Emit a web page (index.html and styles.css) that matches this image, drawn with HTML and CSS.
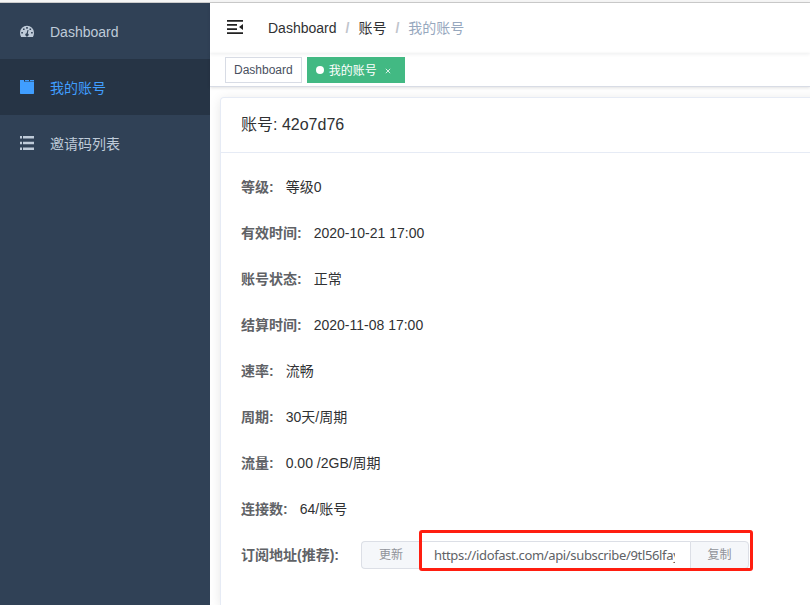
FILE: index.html
```html
<!DOCTYPE html>
<html lang="zh-CN">
<head>
<meta charset="utf-8">
<title>我的账号</title>
<link rel="stylesheet" href="styles.css">
</head>
<body>
<div class="topline"></div>
<div class="app">
  <nav class="sidebar">
    <a class="menu-item first">
      <svg class="icon" viewBox="0 0 14 14"><path fill="currentColor" fill-rule="evenodd" d="M7 .7a7 7 0 0 0-7 7c0 1.500.4 2.900 1.100 4.300h11.800A7.800 7.800 0 0 0 14 7.700a7 7 0 0 0-7-7zM6.200 2.100h1.600v1.600H6.200zM3 3.500h1.600v1.600H3zM1.300 7h1.600v1.600H1.300zM11.100 7h1.600v1.600h-1.600zM9.500 3.500h1.600v1.600H9.500zM7.500 4.900l1 .2-.7 3.400a1.600 1.600 0 1 1-1.200-.2z"/></svg>
      <span>Dashboard</span>
    </a>
    <a class="menu-item active">
      <svg class="icon" viewBox="0 0 14 14"><path fill="currentColor" d="M0 0h4v2h10v11.500l-.5.500H.5L0 13.500zM5 0h4v1.200H5zM10 0h4v1.200h-4z"/><path fill="currentColor" opacity=".5" d="M4 1.200h10V3H4z"/></svg>
      <span>我的账号</span>
    </a>
    <a class="menu-item">
      <svg class="icon" viewBox="0 0 14 14"><path fill="currentColor" d="M0 0h2v2.500H0zM3 0h11v2.500H3zM0 5.800h2v2.500H0zM3 5.800h11v2.500H3zM0 11.500h2V14H0zM3 11.500h11V14H3z"/></svg>
      <span>邀请码列表</span>
    </a>
  </nav>
  <div class="main">
    <header class="navbar">
      <svg class="fold" viewBox="0 0 16 14"><path fill="#222" d="M0 0h16v1.700H0zM0 4h10v1.700H0zM0 8.200h10v1.700H0zM0 12.300h16V14H0zM16 4v6l-4-3z"/></svg>
      <div class="crumbs"><span>Dashboard</span><i>/</i><span>账号</span><i>/</i><span class="current">我的账号</span></div>
    </header>
    <div class="tags">
      <span class="tag">Dashboard</span>
      <span class="tag on"><b class="dot"></b><span class="tag-text">我的账号</span><svg class="close" viewBox="0 0 6 6"><path d="M.8.8l4.400 4.400M5.200.8L.8 5.200" stroke="#d9f0e6" fill="none"/></svg></span>
    </div>
    <section class="card">
      <div class="card-head">账号: 42o7d76</div>
      <div class="card-body">
        <div class="row"><label>等级:</label><span>等级0</span></div>
        <div class="row"><label>有效时间:</label><span>2020-10-21 17:00</span></div>
        <div class="row"><label>账号状态:</label><span>正常</span></div>
        <div class="row"><label>结算时间:</label><span>2020-11-08 17:00</span></div>
        <div class="row"><label>速率:</label><span>流畅</span></div>
        <div class="row"><label>周期:</label><span>30天/周期</span></div>
        <div class="row"><label>流量:</label><span>0.00 /2GB/周期</span></div>
        <div class="row"><label>连接数:</label><span>64/账号</span></div>
        <div class="row">
          <label class="sub-label">订阅地址(推荐):</label>
          <div class="group">
            <button class="btn">更新</button>
            <div class="field"><span class="url">https://idofast.com/api/subscribe/9tl56lfay</span></div>
            <button class="btn last">复制</button>
            <div class="highlight"></div>
          </div>
        </div>
      </div>
    </section>
  </div>
</div>
</body>
</html>
```
FILE: styles.css
```css
* { box-sizing: border-box; }
body {
  margin: 0;
  height: 605px;
  overflow: hidden;
  background: #fff;
  color: #303133;
  font: 14px "Liberation Sans", "Noto Sans CJK SC", sans-serif;
}
.topline { height: 3px; background: #f5f5f5; border-bottom: 1px solid #ccc; }
.app { display: flex; height: 602px; }
.sidebar { width: 210px; flex: none; background: #304156; color: #bfcbd9; }
.menu-item { display: flex; align-items: center; height: 56px; padding: 0 20px; }
.menu-item.first { padding-top: 2px; }
.menu-item.active { background: #263445; color: #409eff; }
.icon { width: 14px; height: 14px; margin-right: 16px; }
.main { flex: 1; min-width: 0; }
.navbar {
  display: flex;
  align-items: center;
  height: 50px;
  padding-left: 17px;
  box-shadow: 0 1px 4px rgba(0, 21, 41, .08);
}
.fold { width: 16px; height: 14px; margin: -2px 25px 0 0; }
.crumbs { display: flex; line-height: 20px; }
.crumbs i { margin: 0 9px; color: #c0c4cc; font-style: normal; font-weight: bold; }
.current { color: #97a8be; }
.tags {
  display: flex;
  gap: 5px;
  height: 34px;
  padding: 4px 15px;
  border-bottom: 1px solid #d8dce5;
  box-shadow: 0 1px 3px rgba(0, 0, 0, .12);
}
.tag {
  display: flex;
  align-items: center;
  height: 26px;
  padding: 0 8px;
  border: 1px solid #d8dce5;
  color: #495060;
  font-size: 12px;
}
.tag.on { width: 98px; background: #42b983; border-color: #42b983; color: #fff; }
.tag-text { margin-top: -2px; }
.dot { width: 8px; height: 8px; margin-right: 5px; border-radius: 50%; background: #fff; }
.close { width: 6px; height: 6px; margin-left: 8px; margin-top: 2px; }
.card {
  height: 508px;
  margin: 10px -20px 0 10px;
  border: 1px solid #e6ebf5;
  border-bottom: 0;
  border-radius: 4px 4px 0 0;
  box-shadow: 0 2px 12px rgba(0, 0, 0, .1);
}
.card-head { height: 55px; padding-left: 20px; border-bottom: 1px solid #e6ebf5; font-size: 16px; line-height: 54px; }
.card-body { padding: 20px 20px 0; }
.row { display: flex; height: 28px; margin-bottom: 18px; line-height: 28px; }
.row:last-child { margin-bottom: 0; }
.row label { padding-right: 12px; color: #606266; font-weight: bold; }
.row .sub-label { width: 120px; padding: 0; }
.group { position: relative; display: flex; width: 388px; height: 28px; }
.btn {
  flex: none;
  width: 59px;
  padding: 0;
  border: 1px solid #dcdfe6;
  border-right: 0;
  border-radius: 4px 0 0 4px;
  background: #f5f7fa;
  color: #909399;
  font: 12px/26px "Liberation Sans", "Noto Sans CJK SC", sans-serif;
}
.btn.last { border-right: 1px solid #dcdfe6; border-radius: 0 4px 4px 0; }
.field { flex: 1; min-width: 0; padding: 0 15px 0 13px; border: 1px solid #dcdfe6; border-right: 0; }
.url {
  display: block;
  overflow: hidden;
  color: #606266;
  font: 13px/27px "Noto Sans", sans-serif;
  letter-spacing: -.35px;
  white-space: nowrap;
}
.highlight {
  position: absolute;
  left: 58px;
  top: -11px;
  width: 334px;
  height: 41px;
  border: 3px solid #ff1e10;
  border-radius: 3px;
}
```
